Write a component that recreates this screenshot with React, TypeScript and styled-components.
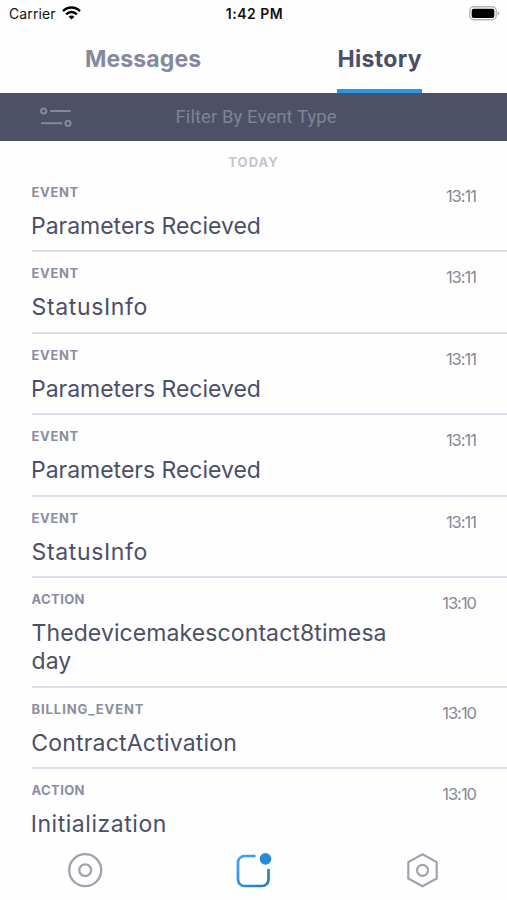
import React from 'react';
import styled, { createGlobalStyle } from 'styled-components';

const GlobalStyle = createGlobalStyle`
  *, *::before, *::after { box-sizing: border-box; }
  body { margin: 0; background: #fefefe; }
`;

const Screen = styled.div`
  width: 507px;
  height: 900px;
  display: flex;
  flex-direction: column;
  overflow: hidden;
  background: #fefefe;
  font-family: Inter, 'Noto Sans', sans-serif;
  color: #4c4f67;
`;

const StatusBar = styled.header`
  flex: none;
  height: 28px;
  padding: 0 7px 0 9px;
  display: grid;
  grid-template-columns: 1fr auto 1fr;
  align-items: center;
  font-size: 14px;
  line-height: 28px;
  color: #111;
`;

const Carrier = styled.div`
  display: flex;
  align-items: center;
  gap: 6px;
  letter-spacing: 0.1px;

  svg {
    margin-top: -2px;
  }
`;

const Clock = styled.div`
  font-weight: 600;
  letter-spacing: 0.5px;
`;

const Battery = styled.div`
  display: flex;
  justify-content: flex-end;
  margin-top: -2px;
`;

const Tabs = styled.nav`
  flex: none;
  height: 65px;
  padding: 0 85px;
  display: flex;
  justify-content: space-between;
`;

const Tab = styled.button<{ $active?: boolean; $tracking: number }>`
  height: 65px;
  padding: 1px 0 0;
  border: 0;
  border-bottom: 4px solid ${(p) => (p.$active ? '#2797e2' : 'transparent')};
  background: none;
  font: 700 23px/60px Inter, sans-serif;
  letter-spacing: ${(p) => p.$tracking}px;
  color: ${(p) => (p.$active ? '#4b4e67' : '#85889f')};
`;

const FilterBar = styled.div`
  flex: none;
  height: 48px;
  padding-left: 39px;
  display: flex;
  align-items: center;
  background: #4d5167;
`;

const FilterLabel = styled.span`
  margin-left: 102.5px;
  font-family: Roboto, sans-serif;
  font-size: 18.5px;
  line-height: 48px;
  letter-spacing: 0.08px;
  color: #7f8397;
`;

const DayHeading = styled.h2`
  flex: none;
  margin: 0;
  height: 29.6px;
  padding-top: 12px;
  text-align: center;
  font-size: 13px;
  line-height: 18px;
  font-weight: 700;
  letter-spacing: 1px;
  color: #c3c5cf;
`;

const EventList = styled.ul`
  flex: 1;
  min-height: 0;
  margin: 0;
  padding: 0 0 0 31.5px;
  list-style: none;
  overflow: hidden;
`;

const EventRow = styled.li`
  display: flex;
  justify-content: space-between;
  align-items: flex-start;
  padding: 13px 31px 10.5px 0;
  border-bottom: 2px solid #dddee9;
`;

const EventText = styled.div`
  display: flex;
  flex-direction: column;
  gap: 12px;
`;

const EventKind = styled.div<{ $tracking: number }>`
  font-size: 13px;
  line-height: 16px;
  font-weight: 650;
  letter-spacing: ${(p) => p.$tracking}px;
  color: #8a8da3;
`;

const EventTitle = styled.div<{ $tracking: number; $shift: number }>`
  margin-left: ${(p) => p.$shift}px;
  font-size: 23px;
  line-height: 28px;
  letter-spacing: ${(p) => p.$tracking}px;
  color: #4c4f67;
  white-space: pre-line;
`;

const EventTime = styled.time`
  margin-top: 2px;
  font-size: 16.5px;
  line-height: 21px;
  letter-spacing: -1px;
  color: #85889a;
`;

const BottomNav = styled.nav`
  flex: none;
  height: 60px;
  padding: 0 67px;
  display: flex;
  justify-content: space-between;
  align-items: center;
  background: #fefefe;
`;

const NavButton = styled.button`
  width: 36px;
  height: 36px;
  padding: 0;
  border: 0;
  background: none;
  display: flex;
`;

type Kind = 'EVENT' | 'ACTION' | 'BILLING_EVENT';

const kindTracking: Record<Kind, number> = {
  EVENT: 0.65,
  ACTION: 0.4,
  BILLING_EVENT: 0.92,
};

type Entry = { kind: Kind; title: string; time: string; tracking: number; shift: number };

const parameters: Entry = { kind: 'EVENT', title: 'Parameters Recieved', time: '13:11', tracking: -0.02, shift: -0.5 };
const statusInfo: Entry = { kind: 'EVENT', title: 'StatusInfo', time: '13:11', tracking: 0.65, shift: 0 };

const entries: Entry[] = [
  parameters,
  statusInfo,
  parameters,
  parameters,
  statusInfo,
  { kind: 'ACTION', title: 'Thedevicemakescontact8timesa\nday', time: '13:10', tracking: 0.1, shift: 0 },
  { kind: 'BILLING_EVENT', title: 'ContractActivation', time: '13:10', tracking: 0.2, shift: -0.3 },
  { kind: 'ACTION', title: 'Initialization', time: '13:10', tracking: 0.54, shift: -0.8 },
];

const WifiIcon = () => (
  <svg width="19" height="14" viewBox="0 0 19 14" fill="none" stroke="#000" strokeWidth="2.4">
    <path d="M1 5.1C5.8.3 13.2.3 18 5.1" />
    <path d="M4.1 8.3C7.2 5.3 11.8 5.3 14.9 8.3" />
    <path d="M9.5 13.6L6.6 10.7C8.2 9.2 10.8 9.2 12.4 10.7Z" fill="#000" stroke="none" />
  </svg>
);

const BatteryIcon = () => (
  <svg width="31" height="15" viewBox="0 0 31 15">
    <rect x="0.8" y="0.8" width="26.4" height="13" rx="4" fill="#fff" stroke="#b5b5b5" strokeWidth="1.4" />
    <rect x="2.7" y="2.7" width="22.6" height="9.2" rx="2" fill="#000" />
    <path d="M28.6 5.2C30.6 5.8 30.6 8.8 28.6 9.4Z" fill="#aaa" />
  </svg>
);

const SlidersIcon = () => (
  <svg width="34" height="22" viewBox="0 0 34 22" fill="none" stroke="#85899c" strokeWidth="2" strokeLinecap="round">
    <circle cx="4.7" cy="5" r="2.6" />
    <path d="M12 5H31" />
    <path d="M3 17.3H22.5" />
    <circle cx="29" cy="17.3" r="2.6" />
  </svg>
);

const TargetIcon = () => (
  <svg width="36" height="36" viewBox="0 0 36 36" fill="none" stroke="#a0a2b0" strokeWidth="2.3">
    <circle cx="18.2" cy="18.2" r="16" />
    <circle cx="18.2" cy="18.2" r="5.9" />
  </svg>
);

const InboxIcon = () => (
  <svg width="36" height="36" viewBox="0 0 36 36" fill="none">
    <defs>
      <linearGradient id="inboxStroke" x1="0" y1="0" x2="1" y2="1">
        <stop offset="0" stopColor="#42a9f0" />
        <stop offset="1" stopColor="#1f78c6" />
      </linearGradient>
    </defs>
    <path
      d="M19.5 4H8.5A6.5 6.5 0 0 0 2 10.5V27.5A6.5 6.5 0 0 0 8.5 34H26A6.5 6.5 0 0 0 32.5 27.5V16.9"
      stroke="url(#inboxStroke)"
      strokeWidth="2.7"
    />
    <circle cx="29.5" cy="6.9" r="5.8" fill="#258bdc" />
  </svg>
);

const HexagonIcon = () => (
  <svg width="36" height="36" viewBox="0 0 36 36" fill="none" stroke="#a0a2b0" strokeWidth="2.2" strokeLinejoin="round">
    <path d="M18.5 2.3L32.7 10.1V26.5L18.5 34.3L4.3 26.5V10.1Z" />
    <circle cx="18.5" cy="18.3" r="5.5" />
  </svg>
);

export default function App() {
  return (
    <>
      <GlobalStyle />
      <Screen>
        <StatusBar>
          <Carrier>
            Carrier
            <WifiIcon />
          </Carrier>
          <Clock>1:42 PM</Clock>
          <Battery>
            <BatteryIcon />
          </Battery>
        </StatusBar>
        <Tabs>
          <Tab $tracking={0.1}>Messages</Tab>
          <Tab $active $tracking={0.35}>History</Tab>
        </Tabs>
        <FilterBar>
          <SlidersIcon />
          <FilterLabel>Filter By Event Type</FilterLabel>
        </FilterBar>
        <DayHeading>TODAY</DayHeading>
        <EventList>
          {entries.map((e, i) => (
            <EventRow key={i}>
              <EventText>
                <EventKind $tracking={kindTracking[e.kind]}>{e.kind}</EventKind>
                <EventTitle $tracking={e.tracking} $shift={e.shift}>
                  {e.title}
                </EventTitle>
              </EventText>
              <EventTime>{e.time}</EventTime>
            </EventRow>
          ))}
        </EventList>
        <BottomNav>
          <NavButton aria-label="Devices">
            <TargetIcon />
          </NavButton>
          <NavButton aria-label="Inbox">
            <InboxIcon />
          </NavButton>
          <NavButton aria-label="Settings">
            <HexagonIcon />
          </NavButton>
        </BottomNav>
      </Screen>
    </>
  );
}
